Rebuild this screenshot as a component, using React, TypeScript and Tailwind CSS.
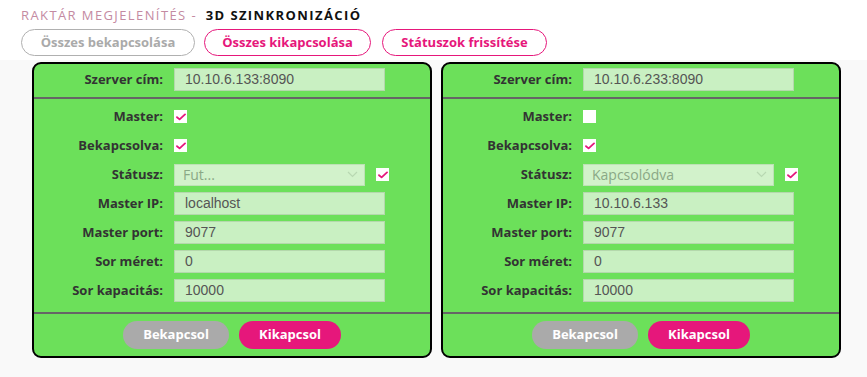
import React from 'react';

type Row = { label: string; kind: 'input' | 'check' | 'status'; value?: string; checked?: boolean };

const Check = ({ checked }: { checked: boolean }) => (
  <span className="inline-flex h-[13px] w-[13px] items-center justify-center bg-white">
    {checked && (
      <svg width="10" height="8" viewBox="0 0 10 8" fill="none">
        <path d="M1 4.2 L3.6 6.4 L9 1.4" stroke="#e5177b" strokeWidth="1.8" strokeLinecap="round" strokeLinejoin="round" />
      </svg>
    )}
  </span>
);

const Field = ({ value }: { value: string }) => (
  <div className="flex h-[23px] w-[211px] items-center border border-[#b4d8ac] bg-[#c9f0c2] px-[10px] font-['Liberation_Sans',Arial,sans-serif] text-[14px] text-[#555]">
    {value}
  </div>
);

const Status = ({ value, checked }: { value: string; checked: boolean }) => (
  <div className="flex items-center gap-[11px]">
    <div className="flex h-[22px] w-[191px] items-center justify-between border border-[#bde2b5] bg-[#d2f2cb] pl-[8px] pr-[6px] font-['Open_Sans',sans-serif] text-[14px] text-[#8aa886]">
      <span>{value}</span>
      <svg width="11" height="7" viewBox="0 0 11 7" fill="none">
        <path d="M1 1 L5.5 5.5 L10 1" stroke="#b8d8b2" strokeWidth="1.2" />
      </svg>
    </div>
    <Check checked={checked} />
  </div>
);

const Panel = ({ server, rows }: { server: string; rows: Row[] }) => (
  <div className="w-[400px] overflow-hidden rounded-[9px] border-2 border-black bg-[#6ce05a] font-['Open_Sans',sans-serif]">
    <div className="flex items-center gap-[11px] border-b-2 border-[#666] pt-[4px] pb-[6px]">
      <div className="w-[129px] text-right text-[13px] font-bold text-[#333]">Szerver cím:</div>
      <Field value={server} />
    </div>
    <div className="flex flex-col border-b-2 border-[#666] pt-[3px] pb-[7px]">
      {rows.map((r) => (
        <div key={r.label} className="flex h-[29px] items-center gap-[11px]">
          <div className="w-[129px] text-right text-[13px] font-bold text-[#333]">{r.label}</div>
          {r.kind === 'check' && <Check checked={!!r.checked} />}
          {r.kind === 'input' && <Field value={r.value || ''} />}
          {r.kind === 'status' && <Status value={r.value || ''} checked={!!r.checked} />}
        </div>
      ))}
    </div>
    <div className="flex items-center justify-center gap-[10px] py-[7px]">
      <button className="h-[28px] w-[106px] rounded-full bg-[#aaaaaa] text-[13px] font-bold text-white">Bekapcsol</button>
      <button className="h-[28px] w-[102px] rounded-full bg-[#e6177b] text-[13px] font-bold text-white">Kikapcsol</button>
    </div>
  </div>
);

export default function App() {
  const left: Row[] = [
    { label: 'Master:', kind: 'check', checked: true },
    { label: 'Bekapcsolva:', kind: 'check', checked: true },
    { label: 'Státusz:', kind: 'status', value: 'Fut...', checked: true },
    { label: 'Master IP:', kind: 'input', value: 'localhost' },
    { label: 'Master port:', kind: 'input', value: '9077' },
    { label: 'Sor méret:', kind: 'input', value: '0' },
    { label: 'Sor kapacitás:', kind: 'input', value: '10000' },
  ];
  const right: Row[] = [
    { label: 'Master:', kind: 'check', checked: false },
    { label: 'Bekapcsolva:', kind: 'check', checked: true },
    { label: 'Státusz:', kind: 'status', value: 'Kapcsolódva', checked: true },
    { label: 'Master IP:', kind: 'input', value: '10.10.6.133' },
    { label: 'Master port:', kind: 'input', value: '9077' },
    { label: 'Sor méret:', kind: 'input', value: '0' },
    { label: 'Sor kapacitás:', kind: 'input', value: '10000' },
  ];

  return (
    <div className="flex min-h-[377px] flex-col bg-[#f9f9f9] font-['Open_Sans',sans-serif]">
      {/* Header */}
      <div className="h-[60px] bg-white px-[21px] pt-[5px]">
        <div className="text-[13px] leading-[20px] tracking-[1.4px]">
          <span className="text-[#c48aa2]">RAKTÁR MEGJELENÍTÉS - </span>
          <span className="ml-[4px] font-bold text-[#111]">3D SZINKRONIZÁCIÓ</span>
        </div>
        <div className="mt-[4px] flex items-center">
          <button className="h-[27px] w-[174px] rounded-full border border-[#b0b0b0] text-[13px] font-bold text-[#aaa]">Összes bekapcsolása</button>
          <button className="ml-[9px] h-[27px] w-[167px] rounded-full border border-[#e6177b] text-[13px] font-bold text-[#e6177b]">Összes kikapcsolása</button>
          <button className="ml-[11px] h-[27px] w-[165px] rounded-full border border-[#e6177b] text-[13px] font-bold text-[#e6177b]">Státuszok frissítése</button>
        </div>
      </div>

      {/* Panels */}
      <div className="flex gap-[9px] pt-[2px] pl-[32px]">
        <Panel server="10.10.6.133:8090" rows={left} />
        <Panel server="10.10.6.233:8090" rows={right} />
      </div>
    </div>
  );
}
